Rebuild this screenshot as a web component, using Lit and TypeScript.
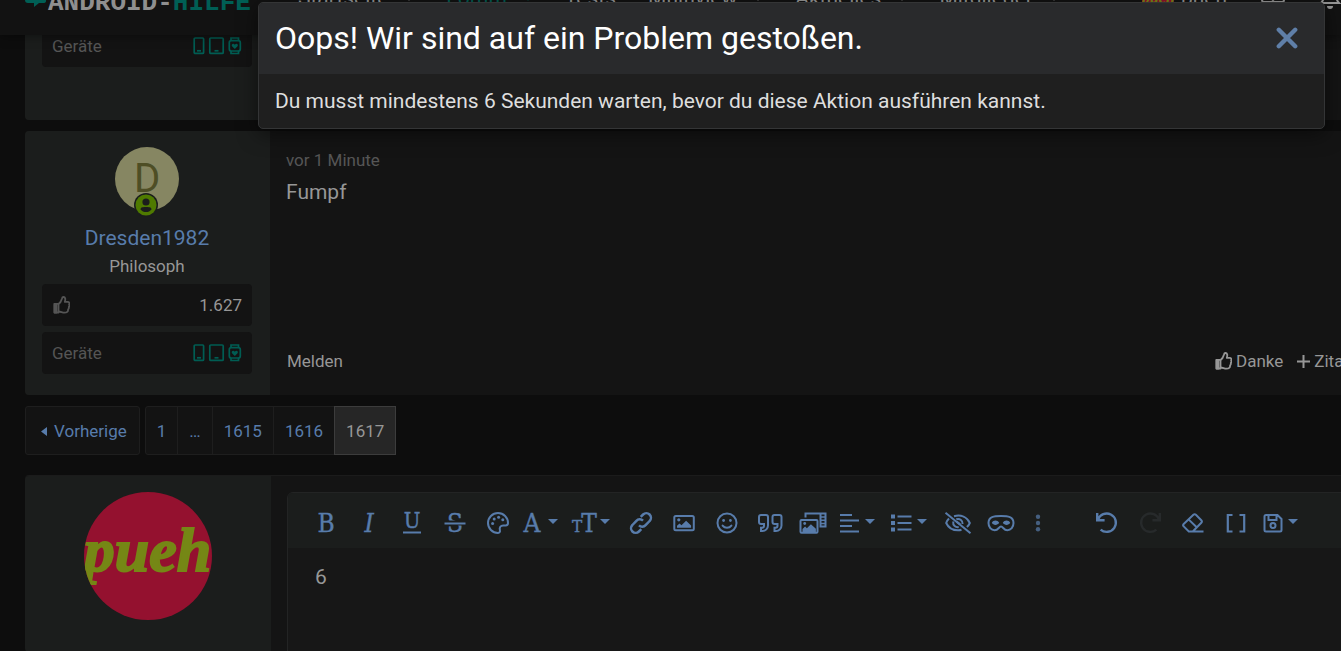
import { LitElement, html, svg, css, nothing, TemplateResult } from "lit";
import { customElement, property } from "lit/decorators.js";

const letter = (ch: string, size: number, y: number, x = 12, italic = false) =>
  svg`<text x=${x} y=${y} font-size=${size} text-anchor="middle" font-style=${italic ? "italic" : "normal"}
    font-family="DejaVu Serif Condensed, DejaVu Serif, serif" stroke="currentColor" stroke-width=".4" fill="currentColor">${ch}</text>`;

const undoShape = svg`<path d="M2.200 2v7.200h7.400M3 8.600A9.200 9.200 0 1 1 5.600 18.600" stroke-width="2.400"/>`;

interface Glyph { w: number; body: TemplateResult | unknown; }

const GLYPHS: Record<string, Glyph> = {
  bold: { w: 24, body: letter("B", 26, 21) },
  italic: { w: 24, body: letter("I", 26, 21, 12, true) },
  underline: { w: 24, body: svg`${letter("U", 22, 17)}<path d="M3 21.500h18"/>` },
  strike: { w: 24, body: svg`${letter("S", 26, 21)}<path d="M1 12h22" stroke="#1b1d1c" stroke-width="5"/><path d="M1.500 12.500h21"/>` },
  palette: { w: 24, body: svg`<path d="M12 2.100C6.400 2.100 2 6.500 2 12s4.400 9.900 10 9.900c1.700 0 2.300-1.300 1.900-2.700-.8-2.800.7-4.800 3.300-4.800h2.500c1.400 0 2.300-1 2.300-2.400C22 6.400 17.600 2.100 12 2.100z"/><g fill="currentColor" stroke="none"><circle cx="6.600" cy="12.400" r="1.500"/><circle cx="8.200" cy="8" r="1.500"/><circle cx="12.600" cy="6.300" r="1.500"/><circle cx="16.800" cy="8.700" r="1.500"/></g>` },
  color: { w: 20, body: letter("A", 26, 21, 9) },
  size: { w: 24, body: svg`${letter("T", 17, 21, 6)}${letter("T", 26, 21, 18)}` },
  link: { w: 24, body: svg`<path d="M10 14.400a4.600 4.600 0 0 0 6.600-.2l4-4.200a4.500 4.500 0 0 0-6.500-6.500l-2.400 2.300M14 9.600a4.600 4.600 0 0 0-6.600.2l-4 4.200a4.500 4.500 0 0 0 6.500 6.500l2.400-2.300" stroke-width="2.500"/>` },
  image: { w: 24, body: svg`<rect x="2.300" y="5" width="19.500" height="14.200" rx="1.500"/><circle cx="6.800" cy="8.800" r="1.600" fill="currentColor" stroke="none"/><path d="M5 16.800v-2l2.500-2.300 2 1.800 4.600-4.600 5 4.800v2.300z" fill="currentColor" stroke="none"/>` },
  smile: { w: 24, body: svg`<circle cx="12" cy="12" r="9.500"/><path d="M7.600 14.600c2.200 2.900 6.600 2.900 8.800 0" stroke-linecap="round"/><circle cx="8.600" cy="9.500" r="1.400" fill="currentColor" stroke="none"/><circle cx="15.400" cy="9.500" r="1.400" fill="currentColor" stroke="none"/>` },
  quote: { w: 26, body: svg`<path d="M4 4h5a2 2 0 0 1 2 2v8.500a5.500 5.500 0 0 1-5.500 5.500H4v-3.300h1a2 2 0 0 0 2-2V13H4a2 2 0 0 1-2-2V6a2 2 0 0 1 2-2z"/><path d="M17.500 4h5a2 2 0 0 1 2 2v8.500a5.500 5.500 0 0 1-5.500 5.500h-1.500v-3.300h1a2 2 0 0 0 2-2V13h-3a2 2 0 0 1-2-2V6a2 2 0 0 1 2-2z"/>` },
  media: { w: 28, body: svg`<path d="M6.500 6.500V2.500h20v13H20.500M21.500 3v12"/><path d="M21.500 6h5M21.500 9.200h5M21.500 12.400h5" stroke-width="1.500"/><rect x="1.500" y="9" width="17" height="12.800" rx="1"/><circle cx="5.700" cy="12.500" r="1.400" fill="currentColor" stroke="none"/><path d="M3.500 21v-3l2.600-2.400 1.800 1.600 4-4 5 4.600V21z" fill="currentColor" stroke="none"/>` },
  align: { w: 22, body: svg`<path d="M2 4h12M2 9.500h19M2 15h12M2 20.500h19"/>` },
  list: { w: 24, body: svg`<path d="M9.500 5.500h14M9.500 12h14M9.500 18.500h14"/><path d="M3 3.500h4v4H3zM3 10h4v4H3zM3 16.500h4v4H3z" fill="currentColor" stroke="none"/>` },
  hide: { w: 28, body: svg`<path d="M5 7.500C3.600 8.800 2.600 10.400 2.200 12c2.300 5 6.700 7.300 11.800 7.300 1.200 0 2.400-.1 3.500-.5M10 5.200C17 3.300 23 6 25.800 12c-.7 1.700-1.700 3-2.900 4.100M9.200 10.500c-.5 4 2.500 6 5.500 5.600M12.300 8.300c3.600-1.300 6.700 1.500 6.300 4.700M12.600 10.600l3.600 2.800"/><path d="M1.500 1.800l25 20.400"/>` },
  mask: { w: 28, body: svg`<path d="M14 5C7 5 1.500 5.500 1.500 12c0 4 2.600 7.200 6.200 7.200 3.700 0 4.200-3.700 6.300-3.700s2.600 3.700 6.300 3.700c3.600 0 6.200-3.200 6.200-7.200C26.500 5.500 21 5 14 5z"/><path d="M4.800 11.800c1.500-3.200 5.700-3.200 7.400 0-1.700 2.800-5.900 2.800-7.400 0zM15.800 11.800c1.700-3.200 5.900-3.200 7.400 0-1.500 2.800-5.700 2.800-7.400 0z" fill="currentColor" stroke="none"/>` },
  more: { w: 6, body: svg`<g fill="currentColor" stroke="none" opacity=".7"><circle cx="3" cy="5.800" r="2.200"/><circle cx="3" cy="12" r="2.200"/><circle cx="3" cy="18.200" r="2.200"/></g>` },
  undo: { w: 24, body: undoShape },
  redo: { w: 24, body: svg`<g transform="matrix(-1 0 0 1 24 0)">${undoShape}</g>` },
  eraser: { w: 24, body: svg`<path d="M22.500 20.500H7.800L2.700 15.400a1.800 1.800 0 0 1 0-2.500L12.400 3.800a1.800 1.800 0 0 1 2.500 0L20.300 9.200a1.800 1.800 0 0 1 0 2.500L11.800 20.500M7.800 8.600l7.900 7.700"/>` },
  brackets: { w: 24, body: svg`<path d="M8.500 4H3.800v16.500h4.700M15.500 4h4.700v16.500h-4.700" stroke-width="2.200"/>` },
  save: { w: 22, body: svg`<path d="M5 4h11.500L20.500 8v11a1.500 1.500 0 0 1-1.500 1.500H5A1.500 1.500 0 0 1 3.500 19V5.500A1.500 1.500 0 0 1 5 4zM7.500 4v5h8V4"/><circle cx="12" cy="14.500" r="2.500"/>` },
};

@customElement("ui-glyph")
export class UiGlyph extends LitElement {
  @property() name = "bold";
  static styles = css`
    :host { display: block; flex: none; }
    svg { display: block; overflow: visible; fill: none; stroke: currentColor; stroke-width: 2; }
  `;
  render() {
    const g = GLYPHS[this.name];
    return html`<svg width=${g.w} height="24" viewBox="0 0 ${g.w} 24" aria-hidden="true">${g.body}</svg>`;
  }
}

const thumb = html`<svg width="18" height="18" viewBox="-1 0 18 18" aria-hidden="true" fill="none" stroke="currentColor" stroke-width="1.800" stroke-linejoin="round">
  <path d="M5.500 8C7.600 6.800 8.300 5 8.900 2.700 9.200 1.300 10 .9 10.800 1c1.500.3 1.900 2.100 1 4.800h2.900c1.500 0 2.100 1.500 1.400 2.600.5.900.4 1.900-.3 2.600.2.900 0 1.800-.7 2.400.1 2.200-1.200 3.300-3.600 3.300-2.400 0-3.500-1.200-6-1.200"/>
  <path d="M1.500 7.800h4v8.700h-4z"/><path d="M1.500 7.800h2v8.700h-2z" fill="currentColor"/>
</svg>`;

const devices = html`<svg class="devices" width="49" height="18" viewBox="0 0 49 18" aria-label="Smartphone, Tablet, Smartwatch" role="img" fill="none" stroke="currentColor" stroke-width="1.700">
  <rect x="1.200" y="1" width="9.400" height="15.400" rx="1"/><path d="M4 13.800h4"/>
  <rect x="16.800" y="1" width="13.400" height="15.400" rx="1"/><path d="M21.500 13.800h4"/>
  <rect x="36.300" y="3.600" width="11" height="10.400" rx="2"/>
  <path d="M38 3.500V1h7.500v2.500M38 14v2.500h7.500V14"/>
  <path d="M41.800 12l-2.800-2.800c-1.200-2 1.500-3.400 2.800-1.500 1.300-1.900 4-.5 2.800 1.500z" fill="currentColor" stroke="none"/>
</svg>`;

const caret = html`<svg class="caret" width="10" height="5" viewBox="0 0 10 5" aria-hidden="true"><path d="M0 0h10L5 5z" fill="currentColor"/></svg>`;

interface Tool { icon: string; label: string; menu?: boolean; disabled?: boolean; narrow?: boolean; }
const TOOLS: Tool[] = [
  { icon: "bold", label: "Fett" }, { icon: "italic", label: "Kursiv" },
  { icon: "underline", label: "Unterstrichen" }, { icon: "strike", label: "Durchgestrichen" },
  { icon: "palette", label: "Textfarbe" }, { icon: "color", label: "Schriftart", menu: true },
  { icon: "size", label: "Schriftgröße", menu: true }, { icon: "link", label: "Link einfügen" },
  { icon: "image", label: "Bild einfügen" }, { icon: "smile", label: "Smileys" },
  { icon: "quote", label: "Zitat" }, { icon: "media", label: "Medien" },
  { icon: "align", label: "Ausrichtung", menu: true }, { icon: "list", label: "Liste", menu: true },
  { icon: "hide", label: "Spoiler" }, { icon: "mask", label: "Inline-Spoiler" },
  { icon: "more", label: "Mehr", narrow: true },
];
const HISTORY: Tool[] = [
  { icon: "undo", label: "Rückgängig" }, { icon: "redo", label: "Wiederholen", disabled: true },
  { icon: "eraser", label: "Formatierung entfernen" }, { icon: "brackets", label: "BBCode" },
  { icon: "save", label: "Entwürfe", menu: true },
];
const NAV = [
  { text: "Startseite", menu: true }, { text: "Forum", menu: true, active: true },
  { text: "Tests" }, { text: "Multiview", menu: true },
  { text: "Aktuelles", menu: true }, { text: "Mitglieder", menu: true },
];

@customElement("app-root")
export class AppRoot extends LitElement {
  static styles = css`
    :host {
      display: block; height: 100vh; overflow: hidden; position: relative;
      background: #0d0d0d; color: #979797;
      font: 17px/24px Roboto, sans-serif;
    }
    * { box-sizing: border-box; }
    a { color: inherit; text-decoration: none; }
    button { font: inherit; color: inherit; background: none; border: 0; padding: 0; }
    h1, p { margin: 0; font-weight: 400; }

    .top { position: relative; z-index: 1; background: #121212; box-shadow: 0 0 12px rgba(0, 0, 0, .5); }
    .bar { display: flex; align-items: flex-end; height: 35px; padding: 0 0 25px 25px; overflow: hidden; }
    .brand { display: flex; flex: none; align-items: flex-end; gap: 2px; width: 273px; height: 28px; }
    .brand svg { flex: none; margin-bottom: 3px; }
    .word { font: bold 26px/26px "Liberation Mono", monospace; color: #8f8f8f; height: 20px; white-space: nowrap; }
    .word span { color: #005f55; }
    .nav { display: flex; gap: 32px; flex: 1; font-size: 21px; white-space: nowrap; }
    .nav a { display: flex; gap: 16px; align-items: center; }
    .nav .active { color: #005f55; }
    .nav .caret { opacity: .5; }
    .account { display: flex; flex: none; align-items: center; gap: 34px; font-size: 21px; }
    .account a { display: flex; gap: 7px; }
    .chip { width: 32px; height: 24px; background: #94112f; color: #788a16; font: italic bold 16px/24px "Liberation Serif", serif; text-align: center; }

    .page { width: calc(100% + 24px); margin-top: -10px; padding-left: 25px; }
    .post { display: flex; background: #141414; border-radius: 4px; margin-bottom: 11px; }
    .user {
      flex: none; width: 245px; padding: 16px 18px 21px 17px; background: #1b1d1c;
      border-radius: 4px 0 0 4px; display: flex; flex-direction: column; align-items: center;
    }
    .partial .user { padding-top: 0; padding-bottom: 53px; }
    .avatar { position: relative; width: 64px; height: 64px; border-radius: 50%; background: #868662; color: #4e4e25; font-size: 40px; line-height: 64px; text-align: center; margin-bottom: 12px; }
    .online { position: absolute; left: 19px; bottom: -6px; }
    .name { font-size: 21px; line-height: 30px; color: #587cab; }
    .rank { line-height: 27px; margin-bottom: 4px; }
    .stat {
      width: 100%; height: 42px; padding: 0 10px; border-radius: 4px; background: #131313;
      display: flex; align-items: center; justify-content: space-between; color: #555;
    }
    .stat + .stat { margin-top: 6px; }
    .stat svg { display: block; }
    .stat b { font-weight: 400; color: #979797; }
    .stat .devices { color: #005d53; }
    .content { flex: 1; padding: 17px 16px 22px; display: flex; flex-direction: column; }
    .time { color: #565656; }
    .text { font-size: 21px; line-height: 30px; margin-top: 5px; color: #979797; }
    .foot { display: flex; gap: 14px; margin-top: auto; padding-left: 1px; }
    .foot .grow { flex: 1; }
    .foot button { display: flex; align-items: center; gap: 4px; }

    .pages { display: flex; gap: 5px; margin-bottom: 20px; color: #587cab; }
    .group { display: flex; border: 1px solid #1e1e1e; border-radius: 3px; background: #131313; }
    .group a { padding: 12px 11px 11px; }
    .group a + a { border-left: 1px solid #1e1e1e; }
    .group .prev { display: flex; align-items: center; gap: 7px; padding: 12px 12px 11px 15px; }
    .group a.current { background: #262626; color: #979797; border: 1px solid #3c3c3c; margin: -1px -1px -1px 0; }

    .reply { border-top: 1px solid #1b1b1b; margin: 0; }
    .reply .user { width: 246px; min-height: 176px; }
    .pueh {
      width: 128px; height: 128px; border-radius: 50%; overflow: hidden; background: #94112f; color: #758715;
      font: italic bold 62px/116px "Liberation Serif", serif; -webkit-text-stroke: 2px #758715;
      display: flex; justify-content: center;
    }
    .editor { flex: 1; margin: 16px 0 0 16px; border: 1px solid #232424; border-radius: 6px 0 0 0; background: #171717; overflow: hidden; display: flex; flex-direction: column; }
    .tools { display: flex; height: 55px; padding: 6px 16px 0; background: #1b1d1c; color: #587cab; }
    .tools button { flex: none; width: 43px; height: 48px; display: flex; align-items: center; justify-content: center; gap: 5px; }
    .tools .menu { width: auto; padding: 0 9px 0 4px; }
    .tools .narrow { width: 32px; }
    .tools .caret { margin-top: -3px; }
    .tools button:disabled { color: #272a2b; }
    .break { width: 31px; }
    textarea { flex: 1; display: block; width: 100%; min-height: 102px; padding: 14px 27px; border: 0; outline: 0; resize: none; background: transparent; color: #979797; font: 21px/30px Roboto, sans-serif; }

    .dialog {
      position: absolute; z-index: 2; top: 2px; left: 258px; right: 16px;
      border: 1px solid #343536; border-radius: 5px; background: #1f1f1f;
      box-shadow: 0 5px 20px rgba(0, 0, 0, .5);
    }
    .title { display: flex; align-items: center; justify-content: space-between; height: 71px; padding: 0 26px 2px 16px; border-radius: 4px 4px 0 0; background: #292a2c; color: #fff; }
    .title h1 { font-size: 32px; line-height: 40px; }
    .title button { color: #5f7fa8; }
    .title svg { display: block; }
    .message { padding: 12px 16px; font-size: 21px; line-height: 30px; color: #dedede; }
  `;

  private tool(t: Tool) {
    return html`<button type="button" class=${t.menu ? "menu" : t.narrow ? "narrow" : ""} aria-label=${t.label} ?disabled=${!!t.disabled}>
      <ui-glyph name=${t.icon}></ui-glyph>${t.menu ? caret : nothing}
    </button>`;
  }

  render() {
    return html`
      <header class="top"><div class="bar">
        <a class="brand" href="#" aria-label="Android-Hilfe">
          <svg width="21" height="18" viewBox="0 0 21 18" aria-hidden="true"><path d="M2 2h17a2 2 0 0 1 2 2v8q0 2-3 2h-4l-5 4v-4H3q-3 0-3-3V4q0-2 2-2z" fill="#005f55"/></svg>
          <div class="word">ANDROID-<span>HILFE</span></div>
        </a>
        <nav class="nav">${NAV.map((n) => html`<a href="#" class=${n.active ? "active" : ""}>${n.text}${n.menu ? caret : nothing}</a>`)}</nav>
        <div class="account">
          <a href="#"><span class="chip">pueh</span><span>pueh</span></a>
          <svg width="24" height="18" viewBox="0 0 24 18" aria-hidden="true" fill="none" stroke="currentColor" stroke-width="2"><rect x="1" y="1" width="22" height="12" rx="2"/><path d="M2 3l10 8 10-8"/></svg>
          <svg width="22" height="24" viewBox="0 0 22 24" aria-hidden="true" fill="none" stroke="currentColor" stroke-width="2"><path d="M5 8a6 6 0 0 1 12 0c0 5 1 7 3 9H2c2-2 3-4 3-9z"/><path d="M8 20h6a3 3 0 0 1-6 0z" fill="currentColor" stroke="none"/></svg>
        </div>
      </div></header>

      <main class="page">
        <article class="post partial">
          <div class="user"><div class="stat"><span>Geräte</span>${devices}</div></div>
        </article>

        <article class="post">
          <div class="user">
            <div class="avatar">D
              <svg class="online" width="24" height="24" viewBox="0 0 24 24" role="img" aria-label="Online">
                <circle cx="12" cy="12" r="12" fill="#1b1d1c"/><circle cx="12" cy="12" r="10.500" fill="#4f7a00"/>
                <circle cx="12" cy="9" r="3.600" fill="#1b1d1c"/><path d="M6.500 16.500c0-2.500 3-2.500 5.500-2.500s5.500 0 5.500 2.500c-2.500 3.400-8.500 3.400-11 0z" fill="#1b1d1c"/>
              </svg>
            </div>
            <a class="name" href="#">Dresden1982</a>
            <div class="rank">Philosoph</div>
            <div class="stat"><span>${thumb}</span><b>1.627</b></div>
            <div class="stat"><span>Geräte</span>${devices}</div>
          </div>
          <div class="content">
            <a class="time" href="#">vor 1 Minute</a>
            <p class="text">Fumpf</p>
            <div class="foot">
              <button type="button">Melden</button><span class="grow"></span>
              <button type="button">${thumb}Danke</button>
              <button type="button"><svg width="13" height="13" viewBox="0 0 13 13" aria-hidden="true"><path d="M6.500 0v13M0 6.500h13" stroke="currentColor" stroke-width="2"/></svg>Zitat</button>
            </div>
          </div>
        </article>

        <nav class="pages" aria-label="Seiten">
          <div class="group"><a class="prev" href="#"><svg width="6" height="9" viewBox="0 0 6 9" aria-hidden="true"><path d="M6 0v9L0 4.500z" fill="currentColor"/></svg>Vorherige</a></div>
          <div class="group"><a href="#">1</a><a href="#">…</a><a href="#">1615</a><a href="#">1616</a><a class="current" href="#" aria-current="page">1617</a></div>
        </nav>

        <form class="post reply">
          <div class="user"><div class="pueh">pueh</div></div>
          <div class="editor">
            <div class="tools" role="toolbar">${TOOLS.map((t) => this.tool(t))}<span class="break"></span>${HISTORY.map((t) => this.tool(t))}</div>
            <textarea aria-label="Antwort" .value=${"6"}></textarea>
          </div>
        </form>
      </main>

      <section class="dialog" role="alertdialog" aria-labelledby="dialog-title">
        <div class="title">
          <h1 id="dialog-title">Oops! Wir sind auf ein Problem gestoßen.</h1>
          <button type="button" aria-label="Schließen"><svg width="22" height="22" viewBox="0 0 22 22" aria-hidden="true"><path d="M2.800 2.800l16.400 16.400M19.200 2.800L2.800 19.200" stroke="currentColor" stroke-width="4.400" stroke-linecap="round"/></svg></button>
        </div>
        <p class="message">Du musst mindestens 6 Sekunden warten, bevor du diese Aktion ausführen kannst.</p>
      </section>
    `;
  }
}
